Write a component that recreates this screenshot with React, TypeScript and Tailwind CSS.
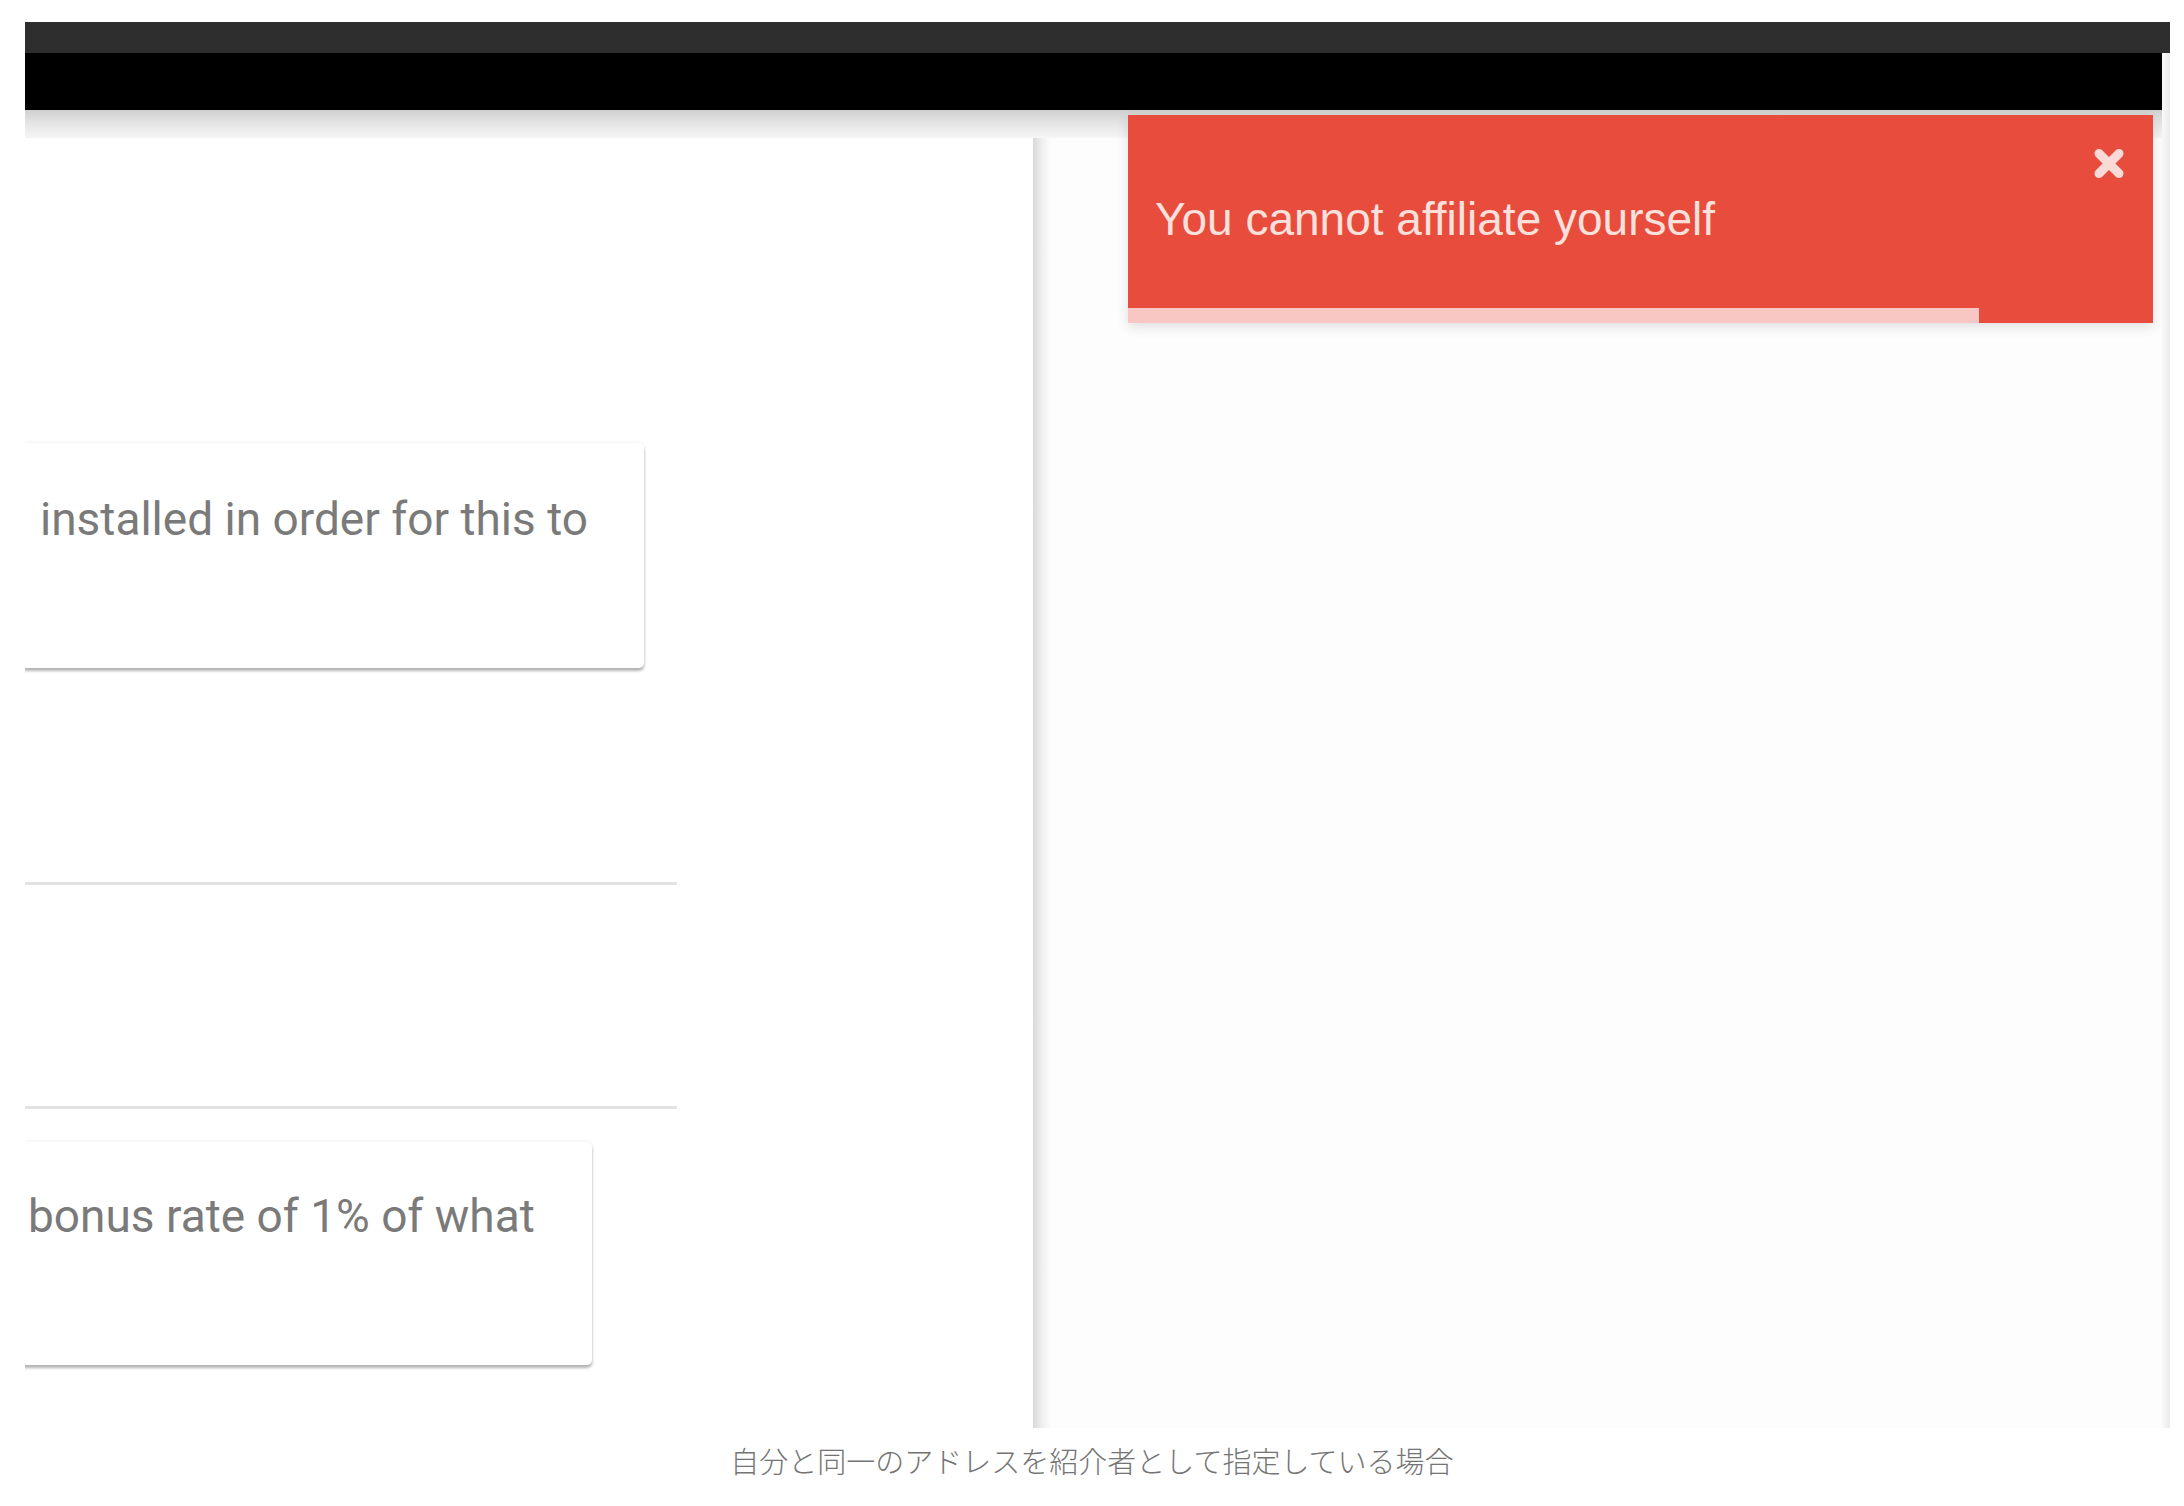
import React from "react";

export default function App() {
  return (
    <div
      className="w-[2184px] h-[1506px] bg-white relative overflow-hidden"
      style={{ fontFamily: "Roboto, 'Liberation Sans', sans-serif" }}
    >
      <div className="pt-[22px] pl-[25px]">
        <div className="w-[2145px] h-[1406px] flex flex-col relative">
          {/* top dark bar */}
          <div className="h-[31px] w-full bg-[#2e2e2e] shrink-0" />
          <div className="flex flex-1">
            <div className="w-[2137px] flex flex-col">
              {/* black bar */}
              <div className="h-[57px] bg-black shrink-0" />
              {/* content */}
              <div className="flex-1 flex flex-col bg-[#fdfdfd]">
                <div className="h-[28px] shrink-0 bg-gradient-to-b from-[#cfcfcf] via-[#e6e6e6] to-[#f6f6f6]" />
                <div className="flex flex-1">
                  <div className="w-[1008px] bg-white overflow-hidden flex flex-col">
                    {/* card 1 */}
                    <div className="mt-[305px] -ml-[20px] w-[639px] h-[225px] bg-white rounded-[5px] shadow-[0_3px_3px_rgba(0,0,0,0.28),0_0_4px_rgba(0,0,0,0.08)] pl-[35px] pt-[48px]">
                      <p className="text-[46px] leading-[56px] text-[#7a7a7a] whitespace-nowrap">
                        installed in order for this to
                      </p>
                    </div>
                    {/* dividers */}
                    <div className="mt-[214px] w-[652px] h-[3px] bg-[#e3e3e3]" />
                    <div className="mt-[221px] w-[652px] h-[3px] bg-[#e3e3e3]" />
                    {/* card 2 */}
                    <div className="mt-[33px] -ml-[20px] w-[587px] h-[223px] bg-white rounded-[5px] shadow-[0_3px_3px_rgba(0,0,0,0.28),0_0_4px_rgba(0,0,0,0.08)] pl-[23px] pt-[46px]">
                      <p className="text-[46px] leading-[56px] text-[#7a7a7a] whitespace-nowrap">
                        bonus rate of 1% of what
                      </p>
                    </div>
                  </div>
                  {/* panel right shadow */}
                  <div className="w-[18px] bg-gradient-to-r from-[#d9d9d9] via-[#efefef] to-[#fdfdfd]" />
                  <div className="flex-1" />
                </div>
              </div>
            </div>
            {/* right edge strip */}
            <div className="w-[8px] bg-gradient-to-r from-[#f9f9f9] to-[#ebebeb]" />
          </div>

          {/* toast */}
          <div className="absolute left-[1103px] top-[93px] w-[1025px] h-[208px] bg-[#e74c3c] shadow-[0_4px_12px_rgba(0,0,0,0.12)]">
            <p
              className="absolute left-[27px] top-[81px] text-[46px] leading-[46px] text-[#fbe0dc] whitespace-nowrap"
              style={{ fontFamily: "'Liberation Sans', Arial, sans-serif" }}
            >
              You cannot affiliate yourself
            </p>
            <svg
              className="absolute right-[28px] top-[32px]"
              width="32"
              height="33"
              viewBox="0 0 32 33"
            >
              <path
                d="M6 6.5 L26 26.5 M26 6.5 L6 26.5"
                stroke="#fadad6"
                strokeWidth="9"
                strokeLinecap="round"
              />
            </svg>
            <div className="absolute left-0 bottom-0 h-[15px] w-[851px] bg-[#f8c7c3]" />
          </div>
        </div>
      </div>

      {/* caption */}
      <p
        className="mt-[17px] text-center text-[29px] leading-[30px] text-[#747474] font-light"
        style={{ fontFamily: "'Noto Sans CJK JP', 'Noto Sans', sans-serif" }}
      >
        自分と同一のアドレスを紹介者として指定している場合
      </p>
    </div>
  );
}
